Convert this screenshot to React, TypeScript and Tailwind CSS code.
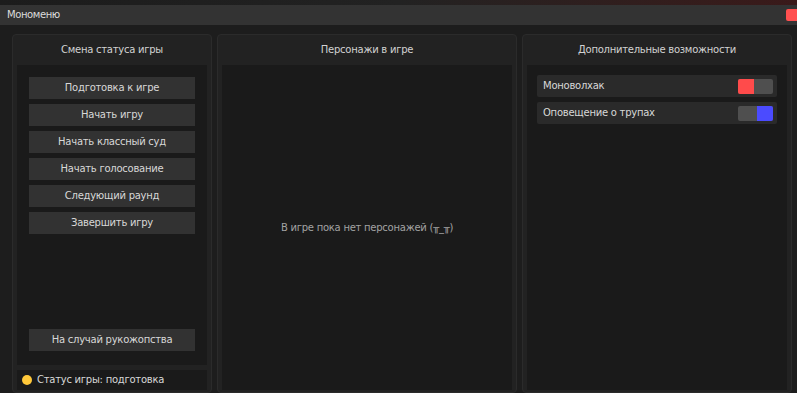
import React from 'react';

const statusButtons = [
  'Подготовка к игре',
  'Начать игру',
  'Начать классный суд',
  'Начать голосование',
  'Следующий раунд',
  'Завершить игру',
];

const Panel: React.FC<{ title: string; width: string; children: React.ReactNode }> = ({ title, width, children }) => (
  <div className={`${width} flex flex-col bg-[#222222] border border-[#2b2b2b] rounded-[4px] px-[4px] pb-[2px]`}>
    <div className="h-[30px] shrink-0 flex items-center justify-center text-[#d2d2d2]">{title}</div>
    {children}
  </div>
);

const Toggle: React.FC<{ on: boolean }> = ({ on }) => (
  <div className="flex h-[15px] w-[35px] rounded-[2px] overflow-hidden bg-[#4f4f4f]">
    {on ? (
      <>
        <div className="w-[16px] bg-[#ff4b4b]" />
        <div className="flex-1" />
      </>
    ) : (
      <>
        <div className="flex-1" />
        <div className="w-[16px] bg-[#4b4bff]" />
      </>
    )}
  </div>
);

export default function App() {
  return (
    <div
      className="w-[797px] h-[393px] overflow-hidden flex flex-col bg-[#1b1b1b] text-[10px] tracking-[-0.25px] leading-none"
      style={{ fontFamily: '"DejaVu Sans", Verdana, sans-serif' }}
    >
      <div className="h-[5px] shrink-0 bg-gradient-to-r from-[#1c1c1c] via-[#222222] to-[#3a1a1a]" />
      <div className="h-[20px] shrink-0 bg-[#333333] flex items-center justify-between pl-[7px] pr-0">
        <span className="text-[#dcdcdc] tracking-[-0.4px]">Мономеню</span>
        <div className="w-[11px] h-[12px] bg-[#ff5050] rounded-l-[2px]" />
      </div>
      <div className="flex-1 flex gap-[5px] pl-[12px] pr-[5px] pt-[9px] bg-[#1d1d1d] min-h-0">
        <Panel title="Смена статуса игры" width="w-[200px]">
          <div className="flex-1 bg-[#1a1a1a] flex flex-col px-[12px] pt-[12px] pb-[14px] gap-[5px] text-[#d8d8d8]">
            {statusButtons.map((b) => (
              <div key={b} className="h-[22px] bg-[#323232] flex items-center justify-center">{b}</div>
            ))}
            <div className="flex-1" />
            <div className="h-[22px] bg-[#323232] flex items-center justify-center">На случай рукожопства</div>
          </div>
          <div className="h-[20px] mt-[5px] bg-[#1a1a1a] flex items-center gap-[5px] px-[5px] text-[#d8d8d8]">
            <div className="w-[10px] h-[10px] rounded-full bg-[#ffc83a]" />
            <span>Статус игры: подготовка</span>
          </div>
        </Panel>
        <Panel title="Персонажи в игре" width="w-[300px]">
          <div className="flex-1 bg-[#1a1a1a] flex items-center justify-center text-[#a3a3a3]">
            В игре пока нет персонажей (╥_╥)
          </div>
        </Panel>
        <Panel title="Дополнительные возможности" width="w-[270px]">
          <div className="flex-1 bg-[#1a1a1a] flex flex-col gap-[5px] pl-[10px] pr-[10px] pt-[10px] text-[#d8d8d8]">
            <div className="h-[22px] bg-[#2a2a2a] rounded-[2px] flex items-center justify-between pl-[6px] pr-[4px]">
              <span>Моноволхак</span>
              <Toggle on />
            </div>
            <div className="h-[22px] bg-[#2a2a2a] rounded-[2px] flex items-center justify-between pl-[6px] pr-[4px]">
              <span>Оповещение о трупах</span>
              <Toggle on={false} />
            </div>
          </div>
        </Panel>
      </div>
    </div>
  );
}
